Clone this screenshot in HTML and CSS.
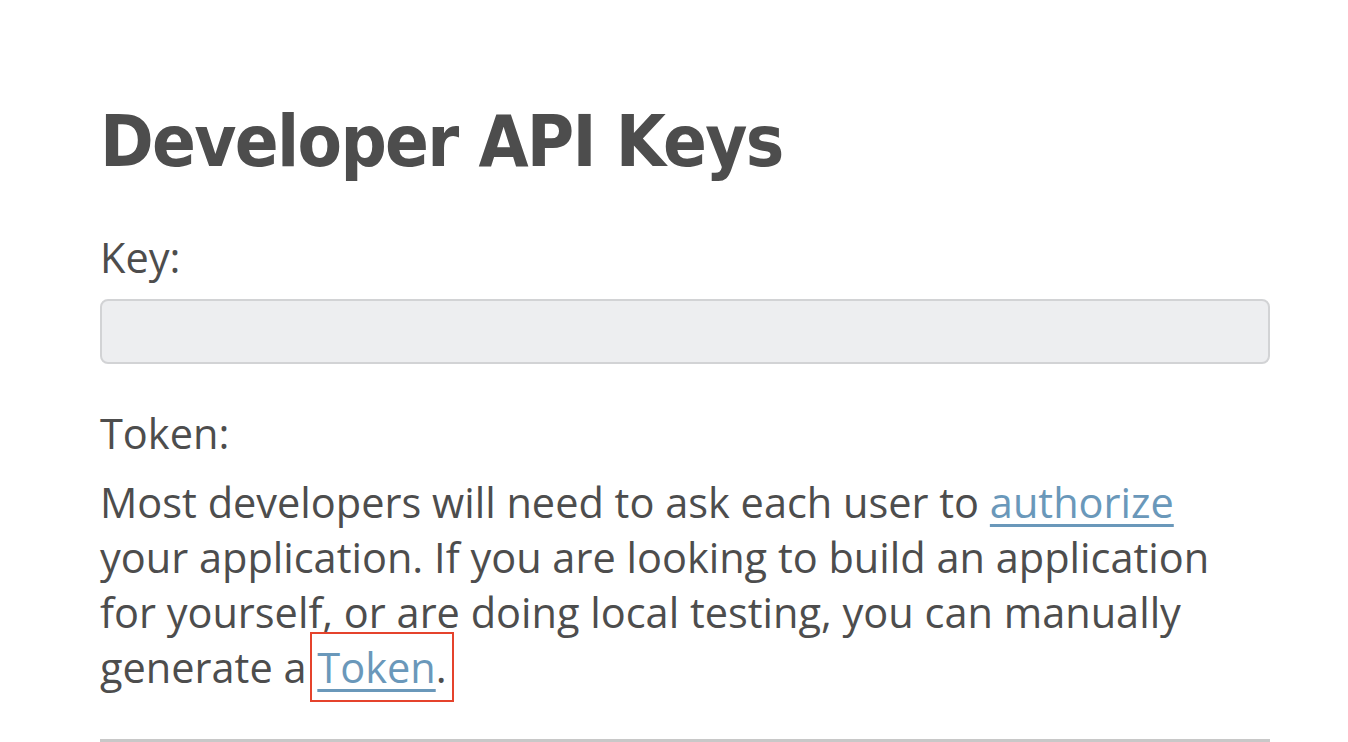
FILE: index.html
```html
<!DOCTYPE html>
<html>
<head>
<meta charset="utf-8">
<link rel="stylesheet" href="styles.css">
</head>
<body>
<main class="page">
  <h1 class="title">Developer API Keys</h1>
  <label class="label">Key:</label>
  <div class="field"></div>
  <label class="label label-token">Token:</label>
  <p class="desc">Most developers will need to ask each user to <a class="link" href="#">authorize</a> your application. If you are looking to build an application for yourself, or are doing local testing, you can manually generate a <span class="highlight"><a class="link" href="#">Token</a>.</span></p>
  <hr class="rule">
</main>
</body>
</html>
```
FILE: styles.css
```css
html, body {
  margin: 0;
  padding: 0;
  background: #ffffff;
}
body {
  font-family: "Open Sans", "Noto Sans", sans-serif;
  color: #4d4d4d;
  overflow: hidden;
}
.page {
  width: 1170px;
  padding: 96px 0 0 100px;
}
.title {
  margin: 0;
  font-family: "DejaVu Sans Condensed", "DejaVu Sans", sans-serif;
  font-weight: bold;
  font-size: 72px;
  line-height: 90px;
  letter-spacing: -1.7px;
  color: #4d4d4d;
}
.label {
  display: block;
  font-size: 41.5px;
  line-height: 55px;
  margin-top: 44px;
}
.label-token {
  margin-top: 42px;
}
.field {
  margin-top: 14px;
  height: 61px;
  background: #edeef0;
  border: 2px solid #d2d3d5;
  border-radius: 8px;
}
.desc {
  width: 1150px;
  margin: 14px 0 0 0;
  font-size: 41.5px;
  line-height: 55px;
}
.link {
  color: #6a98ba;
  text-decoration: underline;
  text-decoration-thickness: 3px;
  text-underline-offset: 6px;
}
.highlight {
  outline: 2px solid #e5432c;
  outline-offset: 5px;
}
.rule {
  margin: 44px 0 0 0;
  border: none;
  border-top: 3px solid #c8c8c8;
}
```
